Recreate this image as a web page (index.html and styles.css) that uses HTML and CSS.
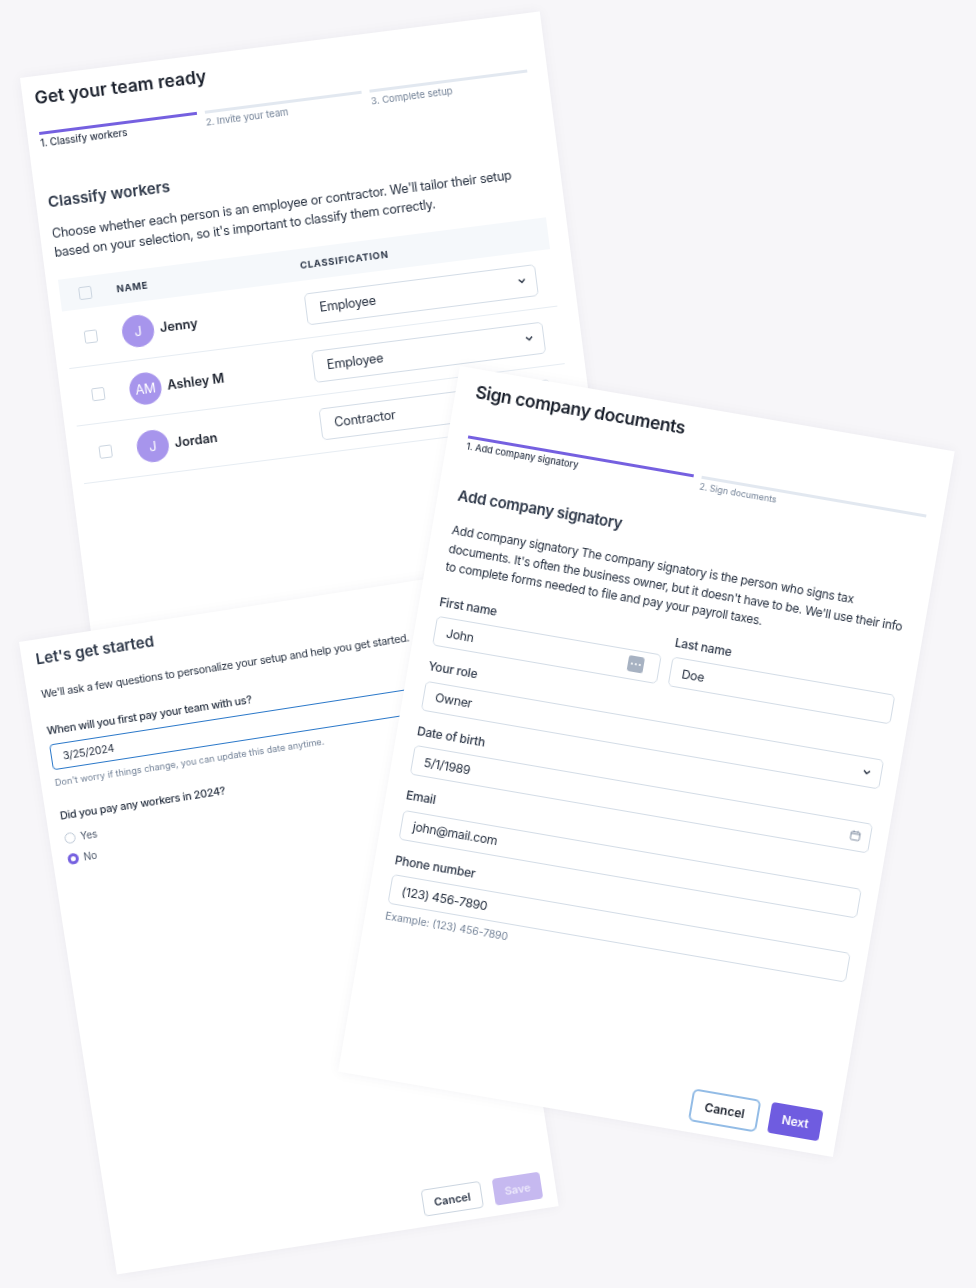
FILE: index.html
```html
<!DOCTYPE html>
<html lang="en">
<head>
  <meta charset="UTF-8">
  <title>Onboarding steps</title>
  <link rel="stylesheet" href="styles.css">
</head>
<body>
  <!-- Team setup -->
  <section class="card team-card">
    <h1 class="title">Get your team ready</h1>
    <div class="stepper team-stepper">
      <div class="step active">1. Classify workers</div>
      <div class="step">2. Invite your team</div>
      <div class="step">3. Complete setup</div>
    </div>
    <h2 class="heading team-heading">Classify workers</h2>
    <p class="copy team-copy">Choose whether each person is an employee or contractor. We'll tailor their setup based on your selection, so it's important to classify them correctly.</p>
    <div class="table">
      <div class="table-head">
        <span class="check"></span>
        <span class="col-name">NAME</span>
        <span class="col-class">CLASSIFICATION</span>
      </div>
      <div class="table-row">
        <span class="check"></span>
        <div class="person"><span class="avatar">J</span><span class="person-name">Jenny</span></div>
        <div class="control table-select">Employee
          <svg class="chevron" viewBox="0 0 24 24"><path d="M6 9l6 6 6-6"/></svg>
        </div>
      </div>
      <div class="table-row">
        <span class="check"></span>
        <div class="person"><span class="avatar">AM</span><span class="person-name">Ashley M</span></div>
        <div class="control table-select">Employee
          <svg class="chevron" viewBox="0 0 24 24"><path d="M6 9l6 6 6-6"/></svg>
        </div>
      </div>
      <div class="table-row">
        <span class="check"></span>
        <div class="person"><span class="avatar">J</span><span class="person-name">Jordan</span></div>
        <div class="control table-select">Contractor
          <svg class="chevron" viewBox="0 0 24 24"><path d="M6 9l6 6 6-6"/></svg>
        </div>
      </div>
    </div>
  </section>

  <!-- Getting started -->
  <section class="card start-card">
    <h2 class="heading start-title">Let's get started</h2>
    <p class="start-copy">We'll ask a few questions to personalize your setup and help you get started.</p>
    <div class="question first-question">When will you first pay your team with us?</div>
    <div class="date-input">3/25/2024</div>
    <div class="start-hint">Don't worry if things change, you can update this date anytime.</div>
    <div class="question second-question">Did you pay any workers in 2024?</div>
    <div class="radio-row first-radio"><span class="radio"></span>Yes</div>
    <div class="radio-row"><span class="radio checked"></span>No</div>
    <div class="actions start-actions">
      <span class="btn btn-plain">Cancel</span>
      <span class="btn btn-faded">Save</span>
    </div>
  </section>

  <!-- Documents -->
  <section class="card sign-card">
    <h1 class="title">Sign company documents</h1>
    <div class="stepper sign-stepper">
      <div class="step active">1. Add company signatory</div>
      <div class="step">2. Sign documents</div>
    </div>
    <h2 class="heading sign-heading">Add company signatory</h2>
    <p class="copy sign-copy">Add company signatory The company signatory is the person who signs tax documents. It's often the business owner, but it doesn't have to be. We'll use their info to complete forms needed to file and pay your payroll taxes.</p>
    <div class="name-grid">
      <div>
        <div class="field-label">First name</div>
        <div class="control sign-input">John
          <svg class="key-icon" viewBox="0 0 16 16">
            <rect x="0" y="0" width="16" height="16" rx="2.5" fill="#a7b2c2"/>
            <circle cx="4" cy="8" r="1.1" fill="#fff"/>
            <circle cx="8" cy="8" r="1.1" fill="#fff"/>
            <circle cx="12" cy="8" r="1.1" fill="#fff"/>
          </svg>
        </div>
      </div>
      <div>
        <div class="field-label">Last name</div>
        <div class="control sign-input">Doe</div>
      </div>
    </div>
    <div class="field">
      <div class="field-label">Your role</div>
      <div class="control sign-input">Owner
        <svg class="chevron" viewBox="0 0 24 24"><path d="M6 9l6 6 6-6"/></svg>
      </div>
    </div>
    <div class="field">
      <div class="field-label">Date of birth</div>
      <div class="control sign-input">5/1/1989
        <svg class="calendar" viewBox="0 0 16 16">
          <rect x="2.5" y="3.5" width="11" height="10" rx="1.5"/>
          <path d="M2.5 6h11M5.5 2v2M10.5 2v2"/>
        </svg>
      </div>
    </div>
    <div class="field">
      <div class="field-label">Email</div>
      <div class="control sign-input">john@mail.com</div>
    </div>
    <div class="field">
      <div class="field-label">Phone number</div>
      <div class="control sign-input">(123) 456-7890</div>
      <div class="sign-hint">Example: (123) 456-7890</div>
    </div>
    <div class="actions sign-actions">
      <span class="btn btn-focus">Cancel</span>
      <span class="btn btn-primary">Next</span>
    </div>
  </section>
</body>
</html>
```

FILE: styles.css
```css
/* Reset */
html, body {
  margin: 0;
  padding: 0;
}

body {
  position: relative;
  width: 976px;
  height: 1288px;
  overflow: hidden;
  background-color: #f7f6f9;
  font-family: Inter, "Noto Sans", sans-serif;
  color: #2d3748;
}

/* Tilted cards */
.card {
  position: absolute;
  box-sizing: border-box;
  display: flex;
  flex-direction: column;
  background-color: #fff;
  box-shadow: 0 0 12px rgba(40, 30, 70, 0.05);
  transform-origin: top left;
  filter: blur(0.35px);
}

.team-card {
  left: 20px;
  top: 78px;
  width: 524px;
  height: 620px;
  padding: 11px 20px 0 12px;
  transform: rotate(-7.3deg);
}

.start-card {
  left: 19px;
  top: 642px;
  width: 447px;
  height: 640px;
  padding: 10px 14px 10px;
  transform: rotate(-8.8deg);
}

.sign-card {
  left: 460px;
  top: 366px;
  width: 502px;
  height: 716px;
  padding: 12px 17px 11px 20px;
  transform: rotate(9.8deg);
}

/* Text */
.title {
  margin: 0;
  font-size: 17.6px;
  line-height: 22px;
  font-weight: 600;
  color: #1a202c;
}

.sign-card .title {
  font-size: 17.6px;
  letter-spacing: -0.4px;
}

.heading {
  margin: 0;
  font-size: 15.2px;
  line-height: 20px;
  font-weight: 600;
  color: #2d3748;
}

.sign-heading {
  font-size: 15px;
  letter-spacing: -0.3px;
}

.copy {
  margin: 0;
  font-size: 12.6px;
  line-height: 18.5px;
  letter-spacing: -0.27px;
  color: #252f3f;
}

.sign-copy {
  font-size: 11.9px;
  letter-spacing: -0.27px;
}

.team-heading { margin-top: 43px; }
.team-copy { margin-top: 13px; }
.sign-heading { margin-top: 34px; }
.sign-copy { margin-top: 16px; }

/* Stepper */
.stepper {
  display: flex;
  gap: 8px;
}

.team-stepper { margin-top: 23px; }
.sign-stepper { margin-top: 33px; }

.step {
  flex: 1;
  padding-top: 3px;
  border-top: 3px solid #e2e8f0;
  font-size: 9.5px;
  line-height: 12px;
  color: #718096;
}

.sign-stepper .step {
  padding-top: 2px;
  font-size: 8.9px;
}

.step.active {
  border-top-color: #7560e0;
  font-size: 9.8px;
  font-weight: 500;
  color: #2d3748;
}

.sign-stepper .step.active { font-size: 9.2px; }

/* Table */
.table {
  margin-top: 18px;
}

.table-head {
  display: flex;
  align-items: center;
  height: 32px;
  padding-left: 19px;
  background-color: #f5f8fb;
  font-size: 9.5px;
  font-weight: 700;
  letter-spacing: 0.7px;
  color: #2d3748;
}

.check {
  flex: none;
  box-sizing: border-box;
  width: 13px;
  height: 13px;
  border: 1.5px solid #cbd5e0;
  border-radius: 2px;
  background-color: #fff;
}

.table-head .check {
  background-color: transparent;
}

.col-name {
  width: 185px;
  margin-left: 25px;
}

.table-row {
  display: flex;
  align-items: center;
  height: 58px;
  box-sizing: border-box;
  padding-left: 19px;
  border-bottom: 1px solid #e6ecf2;
}

.person {
  display: flex;
  align-items: center;
  gap: 6px;
  width: 185px;
  margin-left: 25px;
}

.avatar {
  display: flex;
  align-items: center;
  justify-content: center;
  width: 32px;
  height: 32px;
  border-radius: 50%;
  background-color: #a795ec;
  font-size: 13px;
  color: #fff;
}

.person-name {
  font-size: 12.8px;
  font-weight: 600;
  color: #1a202c;
}

/* Form controls */
.control {
  position: relative;
  display: flex;
  align-items: center;
  box-sizing: border-box;
  height: 30px;
  padding-left: 11px;
  border: 1px solid #d3dce6;
  border-radius: 5px;
  font-size: 12.3px;
  letter-spacing: -0.28px;
  color: #252f3f;
}

.table-select {
  width: 233px;
  height: 32px;
  padding-left: 13px;
  font-size: 12.7px;
  letter-spacing: -0.25px;
}

.chevron {
  position: absolute;
  right: 8px;
  top: 8px;
  width: 12px;
  height: 12px;
  fill: none;
  stroke: #2d3748;
  stroke-width: 3;
}

.calendar {
  position: absolute;
  right: 8px;
  top: 7px;
  width: 13px;
  height: 13px;
  fill: none;
  stroke: #718096;
  stroke-width: 1.1;
}

.key-icon {
  position: absolute;
  right: 15px;
  top: 5px;
  width: 16px;
  height: 16px;
}

/* Signatory form */
.name-grid {
  display: grid;
  grid-template-columns: 228px 1fr;
  gap: 11px;
  margin-top: 19px;
}

.field {
  margin-top: 14px;
}

.field-label {
  margin-bottom: 7.5px;
  font-size: 12px;
  line-height: 14px;
  font-weight: 500;
  letter-spacing: -0.2px;
  color: #2d3748;
}

.sign-hint {
  margin-top: 6px;
  font-size: 10.4px;
  line-height: 13px;
  color: #718096;
}

/* Start form */
.start-title { font-size: 15.1px; }

.start-copy {
  margin: 18px 0 0;
  font-size: 10.8px;
  line-height: 16px;
  letter-spacing: -0.25px;
  color: #252f3f;
}

.question {
  font-size: 10.8px;
  line-height: 14px;
  font-weight: 500;
  letter-spacing: -0.25px;
  color: #252f3f;
}

.first-question { margin-top: 22px; }
.second-question { margin-top: 21px; }

.date-input {
  display: flex;
  align-items: center;
  box-sizing: border-box;
  height: 26px;
  margin-top: 6px;
  padding-left: 11px;
  border: 1.5px solid #2b78c9;
  border-radius: 4px;
  font-size: 10.7px;
  letter-spacing: -0.25px;
  color: #252f3f;
}

.start-hint {
  margin-top: 6px;
  font-size: 9.1px;
  line-height: 13px;
  color: #718096;
}

.radio-row {
  display: flex;
  align-items: center;
  gap: 5px;
  height: 14px;
  margin-top: 7px;
  padding-left: 1px;
  font-size: 10px;
  color: #4a5568;
}

.first-radio { margin-top: 8px; }

.radio {
  box-sizing: border-box;
  width: 11px;
  height: 11px;
  border: 1.2px solid #bcc8d6;
  border-radius: 50%;
  background-color: #fff;
}

.radio.checked {
  border: 3.2px solid #7560e0;
}

/* Buttons */
.actions {
  display: flex;
  justify-content: flex-end;
  margin-top: auto;
}

.start-actions { gap: 12px; }
.sign-actions { gap: 11px; }

.btn {
  display: flex;
  align-items: center;
  justify-content: center;
  box-sizing: border-box;
  font-weight: 600;
}

.btn-plain {
  width: 60px;
  height: 27px;
  border: 1px solid #cbd5e0;
  border-radius: 4px;
  font-size: 11px;
  color: #2d3748;
}

.btn-faded {
  width: 48px;
  height: 27px;
  border-radius: 4px;
  background-color: #c6b9f0;
  font-size: 11px;
  color: #ece8fb;
}

.btn-focus {
  width: 69px;
  height: 33px;
  border: 2px solid #93bce6;
  border-radius: 6px;
  font-size: 12px;
  color: #1a202c;
}

.btn-primary {
  width: 52px;
  height: 31px;
  border-radius: 4px;
  background-color: #6f5ce0;
  font-size: 12px;
  color: #fff;
}
```
